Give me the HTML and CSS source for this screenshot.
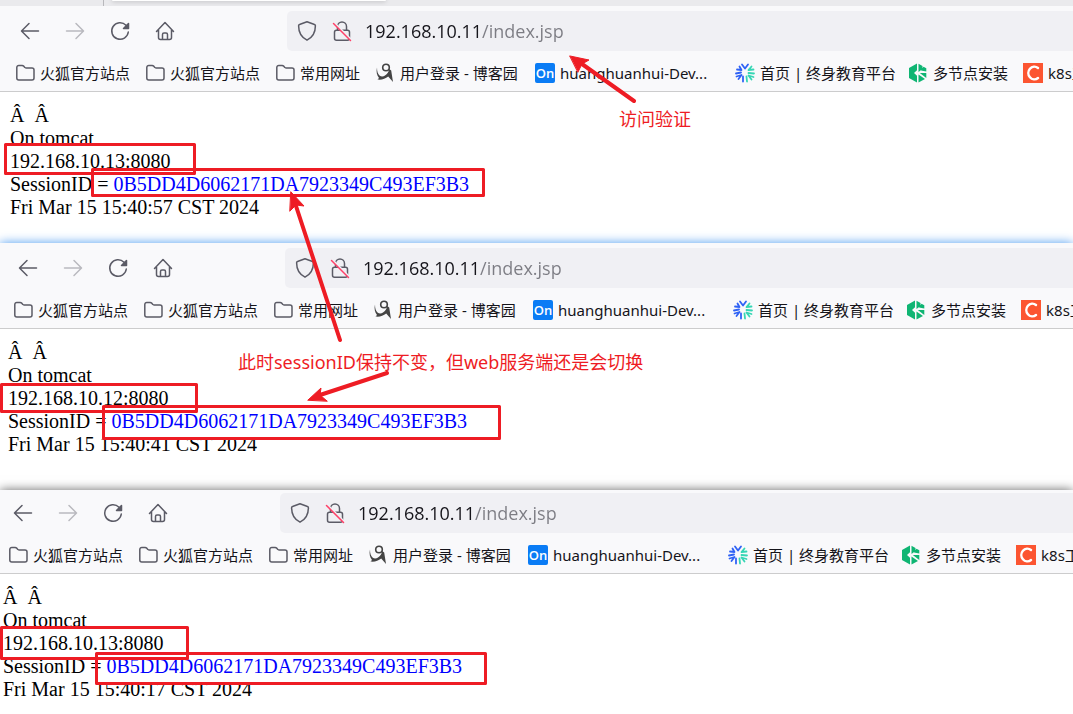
FILE: index.html
```html
<!DOCTYPE html>
<html lang="zh-CN">
<head>
  <meta charset="UTF-8">
  <meta name="viewport" content="width=device-width, initial-scale=1">
  <title>192.168.10.11/index.jsp</title>
  <link rel="stylesheet" href="styles.css">
</head>
<body>
  <!-- shared icons -->
  <svg class="sprite" aria-hidden="true">
    <symbol id="back" viewBox="0 0 24 24"><path d="M20.500 12H4M11 4.500L3.500 12l7.500 7.500"/></symbol>
    <symbol id="forward" viewBox="0 0 24 24"><path d="M3.500 12H20M13 4.500l7.500 7.500-7.500 7.500"/></symbol>
    <symbol id="reload" viewBox="0 0 24 24"><path d="M18 6.200A8.300 8.300 0 1 0 20.300 13"/><path class="solid" d="M20.500 4.500v5h-5z"/></symbol>
    <symbol id="home" viewBox="0 0 24 24"><path d="M3.500 12.500L12 3.500l8.500 9M5.500 11v7.500a2 2 0 0 0 2 2h9a2 2 0 0 0 2-2V11M9.500 20v-4.500a1.500 1.500 0 0 1 1.500-1.500h2a1.500 1.500 0 0 1 1.500 1.500V20"/></symbol>
    <symbol id="shield" viewBox="0 0 24 24"><path d="M12 2.800l7.500 2.700c.6.200.9.700.9 1.300 0 6-2.600 11.500-8.400 14.400C6.200 18.300 3.600 12.800 3.600 6.800c0-.6.300-1.100.9-1.300z"/></symbol>
    <symbol id="lock" viewBox="0 0 24 24"><path d="M7.500 11V7.500a4.500 4.500 0 0 1 9 0V11M7 11.200h10.500a2 2 0 0 1 2 2v6a2 2 0 0 1-2 2h-11a2 2 0 0 1-2-2v-6a2 2 0 0 1 2-2z"/><path class="slash-gap" d="M5 4.500L21 20.500"/><path class="slash" d="M3.500 4.500L20.500 21.500"/></symbol>
    <symbol id="folder" viewBox="0 0 20 20"><path d="M1.800 4.500a2 2 0 0 1 2-2h3.400c.6 0 1 .2 1.400.6l1.200 1.300c.3.400.7.500 1.200.5h6a2 2 0 0 1 2 2V15a2 2 0 0 1-2 2H3.800a2 2 0 0 1-2-2z"/></symbol>
    <symbol id="blog" viewBox="0 0 20 20"><circle class="ink" cx="11" cy="4.500" r="3.300"/><path class="ink-fill" d="M2 4.500c0 4 .8 6.500 2.800 8.200 1.500 1 3.500.9 5.200-.2 2.300-1.400 3.800-3.600 4.200-6.500l2 1.500 1.800 11.500-4.800-5.500c-3 2.500-6.500 3.500-10.700 3L4 15C1.800 12.500 1 8.500 2 4.500z"/><path class="paper" d="M4 8c.5 2 1.300 3.400 2.800 4 2.200.2 4.200-.8 5.700-2.800-3 1-6 .6-8.500-1.200z"/></symbol>
    <symbol id="spark" viewBox="0 0 20 20"><g class="blue"><path d="M7 1.500l3 4 3-4"/><path d="M4.500 3.500L6.500 7 2 6.500"/><path d="M1 10.500L6 9.500"/><path d="M1.500 13.500L6.500 12 3.500 16M8 13.500v5"/></g><g class="teal"><path d="M16.500 3.500L13.500 7l5-.5M13.500 10l5.500.5M18.500 14L13.500 12.500l3 4M11.500 13.500l.5 5"/></g></symbol>
    <symbol id="hex" viewBox="0 0 20 20"><path class="green" d="M9 .5v6.700L6 10l3 2.800v6.700L1 15V5zM10.500.8L14.500 3v3l-4 3zM15.500 3.800L18.300 5.300v3.200L13 7.500zM18.300 10v5l-6.500-5zM10.500 11.500l6.500 4.500-6.500 3.500z"/></symbol>
    <symbol id="c-mark" viewBox="0 0 20 20"><path class="c-bg" d="M0 0h20v20H0z"/><path class="c-arc" d="M15 5A6 6.300 0 1 0 15 15"/></symbol>
  </svg>

  <div class="tab-strip"><span class="tab-left"></span><span class="tab-active"></span></div>

  <section class="window first">
    <div class="toolbar">
      <button class="tool" aria-label="后退"><svg><use href="#back"/></svg></button>
      <button class="tool" aria-label="前进" disabled><svg><use href="#forward"/></svg></button>
      <button class="tool" aria-label="刷新"><svg><use href="#reload"/></svg></button>
      <button class="tool" aria-label="主页"><svg><use href="#home"/></svg></button>
      <div class="url-bar">
        <svg><use href="#shield"/></svg>
        <svg><use href="#lock"/></svg>
        <input class="url" type="text" aria-label="地址" value="192.168.10.11/index.jsp">
      </div>
    </div>
    <nav class="bookmarks">
      <a href="#"><svg><use href="#folder"/></svg>火狐官方站点</a>
      <a href="#"><svg><use href="#folder"/></svg>火狐官方站点</a>
      <a href="#"><svg><use href="#folder"/></svg>常用网址</a>
      <a href="#" class="small"><svg><use href="#blog"/></svg>用户登录 - 博客园</a>
      <a href="#" class="wide"><span class="on">On</span>huanghuanhui-Dev...</a>
      <a href="#" class="medium"><svg><use href="#spark"/></svg>首页 | 终身教育平台</a>
      <a href="#"><svg><use href="#hex"/></svg>多节点安装</a>
      <a href="#"><svg><use href="#c-mark"/></svg>k8s工具</a>
    </nav>
    <div class="page">
      Â&nbsp; Â<br>
      On tomcat<br>
      192.168.10.13:8080<br>
      SessionID = <span class="session">0B5DD4D6062171DA7923349C493EF3B3</span><br>
      Fri Mar 15 15:40:57 CST 2024
    </div>
  </section>

  <section class="window second">
    <div class="toolbar">
      <button class="tool" aria-label="后退"><svg><use href="#back"/></svg></button>
      <button class="tool" aria-label="前进" disabled><svg><use href="#forward"/></svg></button>
      <button class="tool" aria-label="刷新"><svg><use href="#reload"/></svg></button>
      <button class="tool" aria-label="主页"><svg><use href="#home"/></svg></button>
      <div class="url-bar">
        <svg><use href="#shield"/></svg>
        <svg><use href="#lock"/></svg>
        <input class="url" type="text" aria-label="地址" value="192.168.10.11/index.jsp">
      </div>
    </div>
    <nav class="bookmarks">
      <a href="#"><svg><use href="#folder"/></svg>火狐官方站点</a>
      <a href="#"><svg><use href="#folder"/></svg>火狐官方站点</a>
      <a href="#"><svg><use href="#folder"/></svg>常用网址</a>
      <a href="#" class="small"><svg><use href="#blog"/></svg>用户登录 - 博客园</a>
      <a href="#" class="wide"><span class="on">On</span>huanghuanhui-Dev...</a>
      <a href="#" class="medium"><svg><use href="#spark"/></svg>首页 | 终身教育平台</a>
      <a href="#"><svg><use href="#hex"/></svg>多节点安装</a>
      <a href="#"><svg><use href="#c-mark"/></svg>k8s工具</a>
    </nav>
    <div class="page">
      Â&nbsp; Â<br>
      On tomcat<br>
      192.168.10.12:8080<br>
      SessionID = <span class="session">0B5DD4D6062171DA7923349C493EF3B3</span><br>
      Fri Mar 15 15:40:41 CST 2024
    </div>
  </section>

  <section class="window third">
    <div class="toolbar">
      <button class="tool" aria-label="后退"><svg><use href="#back"/></svg></button>
      <button class="tool" aria-label="前进" disabled><svg><use href="#forward"/></svg></button>
      <button class="tool" aria-label="刷新"><svg><use href="#reload"/></svg></button>
      <button class="tool" aria-label="主页"><svg><use href="#home"/></svg></button>
      <div class="url-bar">
        <svg><use href="#shield"/></svg>
        <svg><use href="#lock"/></svg>
        <input class="url" type="text" aria-label="地址" value="192.168.10.11/index.jsp">
      </div>
    </div>
    <nav class="bookmarks">
      <a href="#"><svg><use href="#folder"/></svg>火狐官方站点</a>
      <a href="#"><svg><use href="#folder"/></svg>火狐官方站点</a>
      <a href="#"><svg><use href="#folder"/></svg>常用网址</a>
      <a href="#" class="small"><svg><use href="#blog"/></svg>用户登录 - 博客园</a>
      <a href="#" class="wide"><span class="on">On</span>huanghuanhui-Dev...</a>
      <a href="#" class="medium"><svg><use href="#spark"/></svg>首页 | 终身教育平台</a>
      <a href="#"><svg><use href="#hex"/></svg>多节点安装</a>
      <a href="#"><svg><use href="#c-mark"/></svg>k8s工具</a>
    </nav>
    <div class="page">
      Â&nbsp; Â<br>
      On tomcat<br>
      192.168.10.13:8080<br>
      SessionID = <span class="session">0B5DD4D6062171DA7923349C493EF3B3</span><br>
      Fri Mar 15 15:40:17 CST 2024
    </div>
  </section>

  <!-- red marks drawn over the windows -->
  <svg class="marks" viewBox="0 0 700 714" aria-hidden="true">
    <rect x="5.500" y="144.500" width="189" height="29"/>
    <rect x="92.500" y="169.500" width="391" height="26"/>
    <rect x="1.500" y="384.500" width="195" height="27"/>
    <rect x="103.500" y="406.500" width="396" height="32"/>
    <rect x="1.500" y="627.500" width="186" height="31"/>
    <rect x="96.500" y="653.500" width="389" height="30"/>
    <path class="shaft" d="M582 64l52 37M296 206l44 134M320 395l67-22"/>
    <path class="head" d="M570 56l19 4-7 4-4 8zM291 192l13 14-8-1-6 6zM308 400l13-12-1 7 7 6z"/>
  </svg>
  <p class="note note-visit">访问验证</p>
  <p class="note note-session">此时sessionID保持不变，但web服务端还是会切换</p>
</body>
</html>
```
FILE: styles.css
```css
body {
  margin: 0;
  position: relative;
  background: #fff;
  overflow: hidden;
}

.sprite {
  display: none;
}

svg {
  width: 24px;
  height: 24px;
  flex: none;
  fill: none;
  stroke: #5b5b66;
  stroke-width: 1.5;
  stroke-linecap: round;
  stroke-linejoin: round;
}

/* bottom edge of the tab strip */
.tab-strip {
  display: flex;
  gap: 8px;
  height: 6px;
  background: #eaeaed;
  overflow: hidden;
}

.tab-left {
  width: 103px;
  border-right: 1px solid #b8b8bc;
}

.tab-active {
  width: 274px;
  height: 1px;
  background: #fff;
  border-radius: 0 0 4px 4px;
  box-shadow: 0 0 4px rgba(0, 0, 0, 0.5);
}

/* browser windows, each one starts a little further left */
.window {
  --edge: 10px;
  --top: 5px;
  background: #fff;
}

.second {
  --edge: 8px;
  box-shadow: 0 0 10px #4d9bf0;
}

.third {
  --edge: 3px;
  --top: 3px;
  box-shadow: 0 0 10px rgba(0, 0, 0, 0.6);
}

.toolbar {
  display: flex;
  align-items: center;
  gap: 21px;
  padding: var(--top) 0 0 calc(var(--edge) + 8px);
  background: #f9f9fb;
}

.tool {
  display: flex;
  padding: 0;
  border: 0;
  background: none;
}

.tool:disabled {
  opacity: 0.4;
}

.solid {
  fill: #5b5b66;
}

.url-bar {
  display: flex;
  flex: 1;
  align-items: center;
  gap: 11px;
  height: 40px;
  margin-left: 89px;
  padding-left: 8px;
  border-radius: 5px 0 0 5px;
  background: #f0f0f4;
}

.slash-gap {
  stroke: #f0f0f4;
  stroke-width: 2;
}

.slash {
  stroke: #ff4068;
}

/* host part dark, path part grey */
.url {
  flex: 1;
  min-width: 0;
  padding: 0;
  border: 0;
  outline: 0;
  font: 18px/24px "Open Sans", "Noto Sans", sans-serif;
  color: transparent;
  background: linear-gradient(to right, #15141a 115px, #7c7c83 115px);
  -webkit-background-clip: text;
  background-clip: text;
}

.bookmarks {
  display: flex;
  align-items: center;
  gap: 15px;
  height: 36px;
  padding: 4px 0 0 calc(var(--edge) + 5px);
  border-bottom: 1px solid #cccccd;
  background: #f9f9fb;
  overflow: hidden;
}

.bookmarks a {
  display: flex;
  flex: none;
  align-items: center;
  gap: 5px;
  color: #15141a;
  font: 15px/20px "Noto Sans", "Noto Sans CJK SC", sans-serif;
  text-decoration: none;
  white-space: nowrap;
}

.bookmarks svg {
  width: 20px;
  height: 20px;
}

.bookmarks .small {
  width: 145px;
}

.bookmarks .medium {
  width: 158px;
}

.bookmarks .wide {
  width: 185px;
}

.on {
  width: 20px;
  border-radius: 2px;
  background: #0a7cf5;
  color: #fff;
  font-family: "Open Sans", sans-serif;
  font-size: 13px;
  font-weight: 600;
  text-align: center;
}

.ink {
  stroke: #444;
  stroke-width: 1.6;
}

.ink-fill {
  fill: #444;
  stroke: none;
}

.paper {
  fill: #f9f9fb;
  stroke: none;
}

.blue {
  stroke: #2f62f5;
  stroke-width: 1.8;
}

.teal {
  stroke: #35d6b4;
  stroke-width: 1.8;
}

.green {
  fill: #0fb573;
  stroke: none;
}

.c-bg {
  fill: #fc5531;
  stroke: none;
}

.c-arc {
  stroke: #fff;
  stroke-width: 2.5;
}

.page {
  padding: 12px 0 24px var(--edge);
  color: #000;
  font: 20px/23px "Liberation Serif", serif;
}

.second .page {
  padding-bottom: 34px;
}

.session {
  color: #00f;
}

/* annotations */
.marks {
  position: absolute;
  top: 0;
  left: 0;
  width: 700px;
  height: 714px;
  stroke: #ee1c24;
  stroke-width: 3;
  pointer-events: none;
}

.shaft {
  stroke-width: 4;
}

.head {
  fill: #ee1c24;
  stroke-width: 1;
}

.note {
  position: absolute;
  margin: 0;
  color: #ee1c24;
  font: 18px/24px "Noto Sans", "Noto Sans CJK SC", sans-serif;
  white-space: nowrap;
}

.note-visit {
  top: 107px;
  left: 619px;
}

.note-session {
  top: 350px;
  left: 238px;
}
```
